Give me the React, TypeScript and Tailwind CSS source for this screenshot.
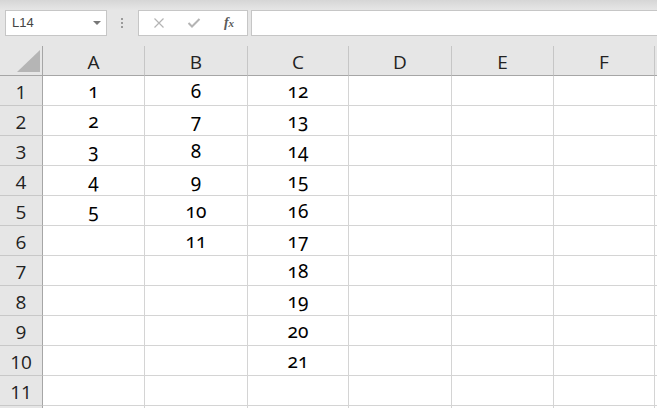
const cols = ['A', 'B', 'C', 'D', 'E', 'F'];

const data: Record<string, (number | null)[]> = {
  A: [1, 2, 3, 4, 5],
  B: [6, 7, 8, 9, 10, 11],
  C: [12, 13, 14, 15, 16, 17, 18, 19, 20, 21],
};

const rows = Array.from({ length: 12 }, (_, i) => i + 1);

export default function App() {
  return (
    <div className="w-[657px] h-[408px] overflow-hidden bg-[#e6e6e6] font-['Open_Sans',sans-serif]">
      {/* top strip */}
      <div className="h-[10px] bg-gradient-to-b from-[#d6d6d6] to-[#e6e6e6]" />

      {/* formula bar */}
      <div className="flex h-[26px] pl-[5px]">
        <div className="flex w-[102px] items-center justify-between border border-[#c6c6c6] bg-white pl-[6px] pr-[5px]">
          <span className="text-[13px] text-[#444] font-['Liberation_Sans',sans-serif]">L14</span>
          <span className="h-0 w-0 border-x-[4px] border-t-[4px] border-x-transparent border-t-[#777]" />
        </div>
        <div className="flex w-[31px] flex-col items-center justify-center gap-[2px] pr-[1px]">
          <span className="h-[2px] w-[2px] bg-[#9a9a9a]" />
          <span className="h-[2px] w-[2px] bg-[#9a9a9a]" />
          <span className="h-[2px] w-[2px] bg-[#9a9a9a]" />
        </div>
        <div className="flex w-[110px] items-center border border-[#c6c6c6] bg-white">
          <div className="flex w-[38px] justify-center pl-[2px]">
            <svg width="12" height="12" viewBox="0 0 12 12">
              <path d="M1.5 1.5 L10.5 10.5 M10.5 1.5 L1.5 10.5" stroke="#b4b4b4" strokeWidth="1.2" fill="none" />
            </svg>
          </div>
          <div className="flex w-[34px] justify-center">
            <svg width="14" height="12" viewBox="0 0 14 12">
              <path d="M1.5 6 L5 9.5 L12.5 2" stroke="#b4b4b4" strokeWidth="2" fill="none" />
            </svg>
          </div>
          <div className="flex w-[36px] justify-center">
            <span className="font-['Liberation_Serif',serif] text-[14px] font-bold italic leading-none text-[#5a5a5a]">
              f<span className="text-[11px]">x</span>
            </span>
          </div>
        </div>
        <div className="ml-[3px] flex-1 border border-r-0 border-[#c6c6c6] bg-white" />
      </div>

      <div className="h-[10px]" />

      {/* sheet grid */}
      <div className="grid grid-cols-[43px_102px_103px_101px_103px_102px_101px_1fr] bg-white">
        {/* header row */}
        <div className="relative h-[30px] border-b border-r border-[#a6a6a6] bg-[#e6e6e6]">
          <svg className="absolute left-[17px] top-[4px]" width="23" height="22" viewBox="0 0 23 22">
            <polygon points="0,22 23,22 23,0" fill="#b5b5b5" />
          </svg>
        </div>
        {cols.map((c) => (
          <div
            key={c}
            className="flex h-[30px] items-end justify-center border-b border-r border-b-[#a6a6a6] border-r-[#c6c6c6] bg-[#e6e6e6] text-[19px] leading-[26px] text-[#222]"
          >
            {c}
          </div>
        ))}
        <div className="h-[30px] border-b border-[#a6a6a6] bg-[#e6e6e6]" />

        {/* body rows */}
        {rows.map((r) => (
          <Row key={r} r={r} />
        ))}
      </div>
    </div>
  );
}

function Row({ r }: { r: number }) {
  return (
    <>
      <div className="flex h-[30px] items-end justify-center border-b border-r border-b-[#c8c8c8] border-r-[#a6a6a6] bg-[#e6e6e6] text-[19px] leading-[26px] text-[#222]">
        {r < 12 ? r : ''}
      </div>
      {cols.map((c) => {
        const v = data[c]?.[r - 1];
        return (
          <div
            key={c}
            className="flex h-[30px] items-end justify-center border-b border-r border-[#d4d4d4] pb-[1px] font-['Noto_Sans',serif] text-[19px] leading-[26px] text-black [font-variant-numeric:oldstyle-nums]"
          >
            {v ?? ''}
          </div>
        );
      })}
      <div className="h-[30px] border-b border-[#d4d4d4]" />
    </>
  );
}
